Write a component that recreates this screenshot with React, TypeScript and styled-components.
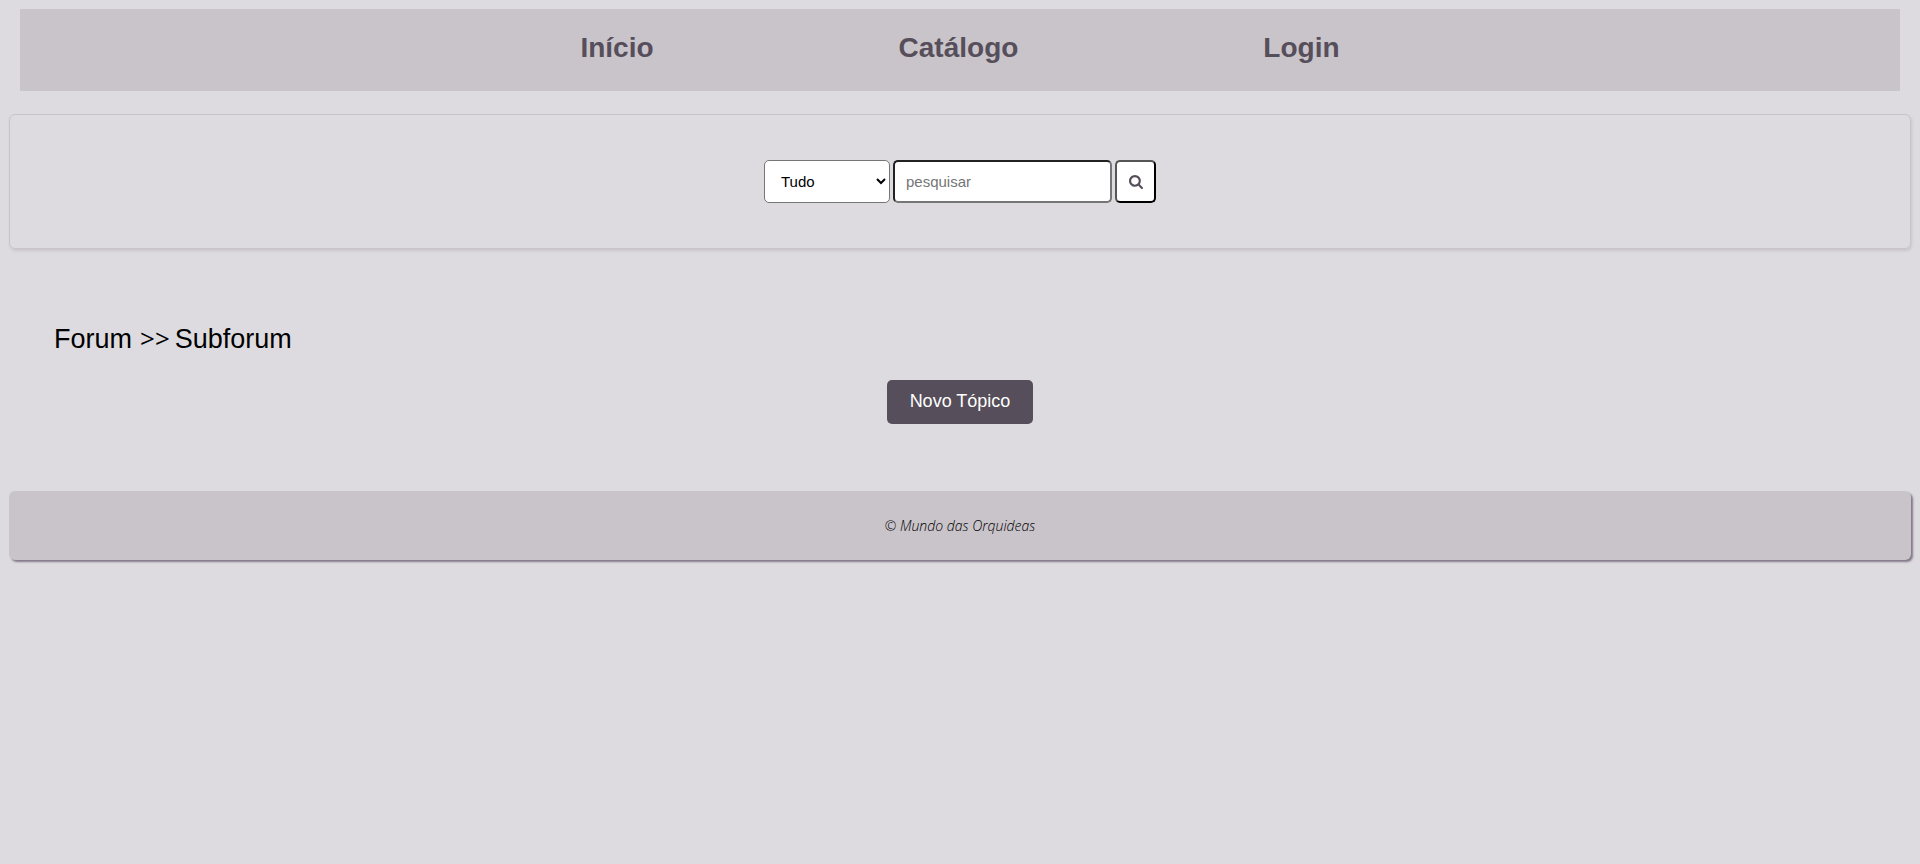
import React from 'react';
import styled, { createGlobalStyle } from 'styled-components';

const GlobalStyle = createGlobalStyle`
  * { box-sizing: border-box; }
  body {
    margin: 0;
    background: #dddbdf;
    color: #000;
    font-family: "Liberation Sans", Arial, sans-serif;
  }
`;

const Page = styled.div`
  min-height: 100vh;
  padding: 9px;
`;

const NavBar = styled.nav`
  display: flex;
  flex-wrap: wrap;
  justify-content: center;
  gap: 0 245px;
  margin: 0 11px 23px;
  padding: 23px 20px 27px;
  background: #c9c4ca;
`;

const NavLink = styled.a`
  color: #564e5a;
  font-size: 28px;
  font-weight: bold;
  line-height: 32px;
  text-decoration: none;
`;

const SearchForm = styled.form`
  display: flex;
  flex-wrap: wrap;
  justify-content: center;
  gap: 3px;
  padding: 45px 20px;
  border: 1px solid #c9c4ca;
  border-radius: 6px;
  box-shadow: 1px 2px 3px #c9c4ca;
`;

const CategorySelect = styled.select`
  width: 126px;
  height: 43px;
  padding: 0 3px 0 12px;
  border: 1px solid #767676;
  border-radius: 5px;
  background-color: #fff;
  color: #000;
  font: 15px "Liberation Sans", Arial, sans-serif;
`;

const SearchInput = styled.input`
  width: 219px;
  height: 43px;
  padding: 0 11px;
  border: 2px solid;
  border-color: #222 #767676 #767676 #222;
  border-radius: 5px;
  background: #fff;
  font: 15px "Liberation Sans", Arial, sans-serif;

  &::placeholder { color: #757575; }
`;

const SearchButton = styled.button`
  display: flex;
  align-items: center;
  justify-content: center;
  width: 41px;
  height: 43px;
  padding: 0;
  border: 2px solid;
  border-color: #555 #000 #000 #555;
  border-radius: 5px;
  background: #fff;
  color: #564e5a;
`;

const Main = styled.main`
  padding: 72px 45px 67px;
`;

const Breadcrumb = styled.div`
  display: flex;
  align-items: baseline;
  font-size: 27px;
  line-height: 36px;
`;

const Crumb = styled.a`
  color: #000;
  text-decoration: none;
`;

const Separator = styled.span`
  margin: 0 5px 0 8px;
  font-family: "Open Sans", "Noto Sans", sans-serif;
  font-size: 26px;
  font-weight: 400;
  line-height: 28px;
`;

const TopicButton = styled.button`
  display: block;
  margin: 23px auto 0;
  padding: 10px 23px 12px;
  border: 0;
  border-radius: 5px;
  background: #564e5a;
  color: #fff;
  font: 18px/22px "Liberation Sans", Arial, sans-serif;
`;

const Footer = styled.footer`
  padding: 24px 20px;
  border-radius: 6px;
  background: #c9c4ca;
  box-shadow: 2px 2px 2px #857a89;
  font: italic 300 14px/21px "Open Sans", "Noto Sans", sans-serif;
  text-align: center;
`;

const SearchIcon = () => (
  <svg width="14" height="14" viewBox="0 0 1664 1664" fill="currentColor" aria-hidden="true">
    <path d="M1152 704q0-185-131.5-316.5T704 256 387.5 387.5 256 704t131.5 316.5T704 1152t316.5-131.5T1152 704zm512 832q0 52-38 90t-90 38q-54 0-90-38l-343-342q-179 124-399 124-143 0-273.5-55.5t-225-150-150-225T0 704t55.5-273.5 150-225 225-150T704 0t273.5 55.5 225 150 150 225T1408 704q0 220-124 399l343 343q37 37 37 90z" />
  </svg>
);

export default function App() {
  return (
    <Page>
      <GlobalStyle />
      <NavBar>
        <NavLink href="#inicio">Início</NavLink>
        <NavLink href="#catalogo">Catálogo</NavLink>
        <NavLink href="#login">Login</NavLink>
      </NavBar>
      <SearchForm>
        <CategorySelect aria-label="Categoria">
          <option>Tudo</option>
        </CategorySelect>
        <SearchInput type="text" placeholder="pesquisar" aria-label="pesquisar" />
        <SearchButton type="button" aria-label="Pesquisar">
          <SearchIcon />
        </SearchButton>
      </SearchForm>
      <Main>
        <Breadcrumb>
          <Crumb href="#forum">Forum</Crumb>
          <Separator>&gt;&gt;</Separator>
          <Crumb href="#subforum">Subforum</Crumb>
        </Breadcrumb>
        <TopicButton type="button">Novo Tópico</TopicButton>
      </Main>
      <Footer>© Mundo das Orquideas</Footer>
    </Page>
  );
}
